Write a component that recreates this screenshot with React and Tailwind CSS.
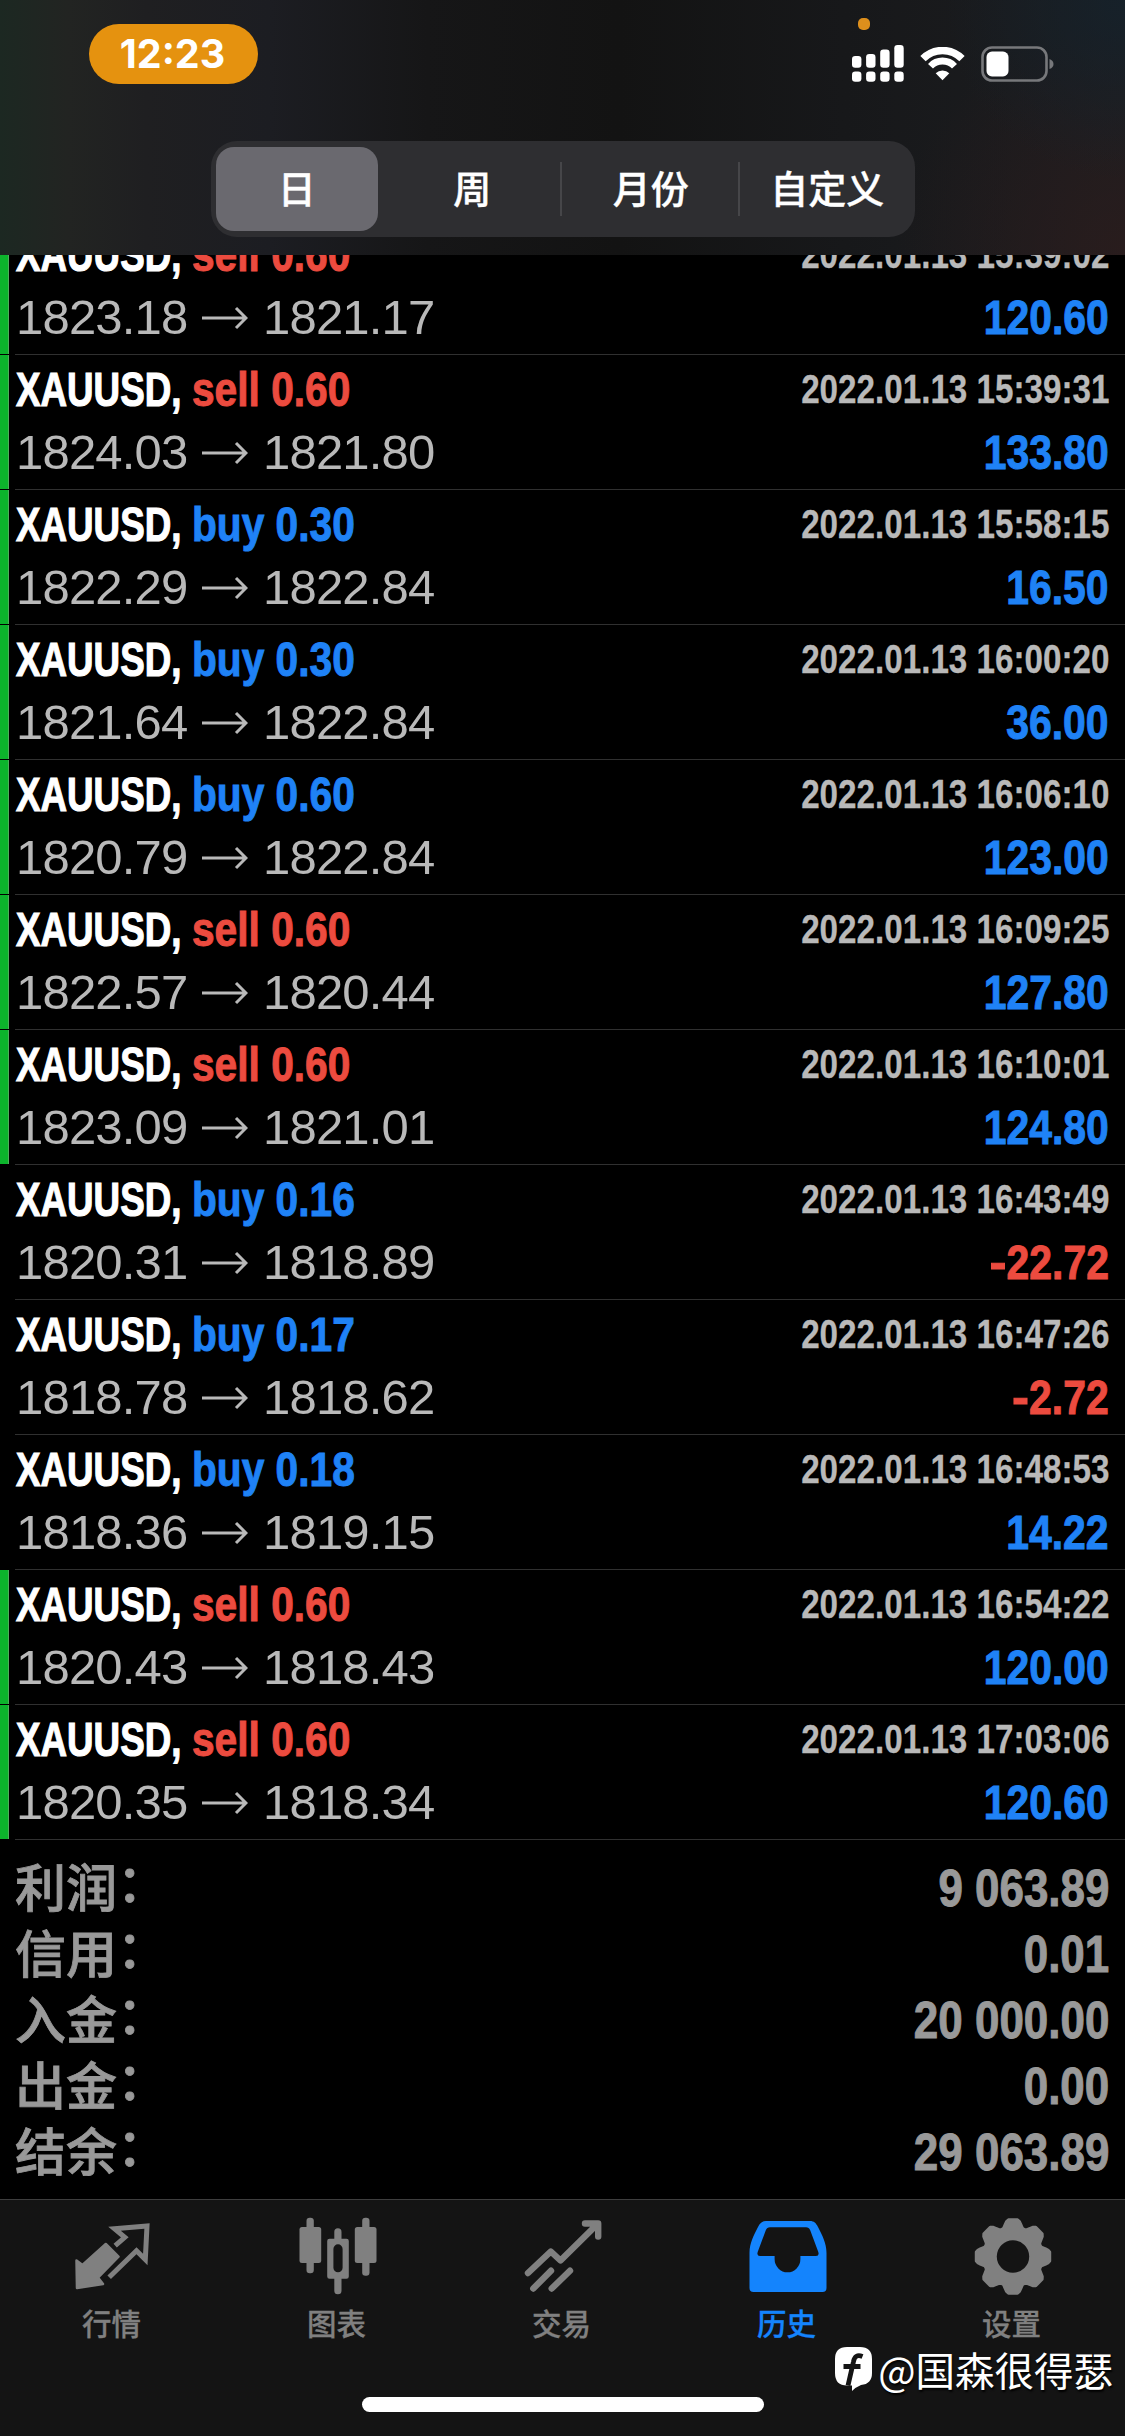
import React from "react";
import clsx from "clsx";

const deals = [
  { type: "sell", lots: "0.60", open: "1823.18", close: "1821.17", time: "2022.01.13 15:39:02", profit: "120.60", tp: true },
  { type: "sell", lots: "0.60", open: "1824.03", close: "1821.80", time: "2022.01.13 15:39:31", profit: "133.80", tp: true },
  { type: "buy", lots: "0.30", open: "1822.29", close: "1822.84", time: "2022.01.13 15:58:15", profit: "16.50", tp: true },
  { type: "buy", lots: "0.30", open: "1821.64", close: "1822.84", time: "2022.01.13 16:00:20", profit: "36.00", tp: true },
  { type: "buy", lots: "0.60", open: "1820.79", close: "1822.84", time: "2022.01.13 16:06:10", profit: "123.00", tp: true },
  { type: "sell", lots: "0.60", open: "1822.57", close: "1820.44", time: "2022.01.13 16:09:25", profit: "127.80", tp: true },
  { type: "sell", lots: "0.60", open: "1823.09", close: "1821.01", time: "2022.01.13 16:10:01", profit: "124.80", tp: true },
  { type: "buy", lots: "0.16", open: "1820.31", close: "1818.89", time: "2022.01.13 16:43:49", profit: "-22.72" },
  { type: "buy", lots: "0.17", open: "1818.78", close: "1818.62", time: "2022.01.13 16:47:26", profit: "-2.72" },
  { type: "buy", lots: "0.18", open: "1818.36", close: "1819.15", time: "2022.01.13 16:48:53", profit: "14.22" },
  { type: "sell", lots: "0.60", open: "1820.43", close: "1818.43", time: "2022.01.13 16:54:22", profit: "120.00", tp: true },
  { type: "sell", lots: "0.60", open: "1820.35", close: "1818.34", time: "2022.01.13 17:03:06", profit: "120.60", tp: true },
];

const totals = [
  ["利润", "9 063.89"],
  ["信用", "0.01"],
  ["入金", "20 000.00"],
  ["出金", "0.00"],
  ["结余", "29 063.89"],
];

function SignalIcon() {
  const tops = [11, 9, 4.5, 0];
  return (
    <svg width="52" height="37" viewBox="0 0 52 37" fill="#fff">
      {tops.map((y, i) => (
        <g key={i}>
          <rect x={i * 14.1} y={y} width="9.4" height={22.7 - y} rx="3.2" />
          <rect x={i * 14.1} y="26.5" width="9.4" height="10.2" rx="3.2" />
        </g>
      ))}
    </svg>
  );
}

function WifiIcon() {
  return (
    <svg width="45" height="34" viewBox="0 0 45 34" fill="none" stroke="#fff">
      <path d="M3 11.7A27.2 27.2 0 0 1 42 11.7" strokeWidth="7.4" />
      <path d="M10.5 19.2A16.4 16.4 0 0 1 34.5 19.2" strokeWidth="6.8" />
      <path d="M22.5 33.3L15.7 26.2A9.6 9.6 0 0 1 29.3 26.2Z" fill="#fff" stroke="none" />
    </svg>
  );
}

function BatteryIcon() {
  return (
    <svg width="73" height="36" viewBox="0 0 73 36">
      <rect x="1.5" y="1.5" width="64" height="33" rx="9.5" fill="none" stroke="#77787b" strokeWidth="2.6" />
      <rect x="5.5" y="5.6" width="22" height="24.8" rx="5.5" fill="#fff" />
      <path d="M68.5 13Q72.5 14.5 72.5 18T68.5 23Z" fill="#77787b" />
    </svg>
  );
}

function Header() {
  const tab = "flex flex-1 items-center justify-center";
  return (
    <header className="relative h-[255px] bg-[linear-gradient(90deg,#1c2822_0%,#222422_6%,#1f1f21_13%,#1c1d22_24%,#161617_38%,#131313_55%,#17181a_75%,#1c1d20_100%)]">
      {/* tint of the content showing through the translucent bar */}
      <div className="absolute inset-0 bg-[radial-gradient(circle_at_100%_0%,#15222ccc,transparent_180px),radial-gradient(circle_at_100%_100%,#2c1c1ccc,transparent_230px)]" />
      <div className="absolute top-[18px] left-[858px] size-3 rounded-[5px] bg-[#dd8f1c]" />
      <div className="relative flex h-[141px] items-start justify-between pr-[71px] pl-[89px]">
        <div className="mt-6 flex h-[60px] w-[169px] items-center justify-center rounded-[30px] bg-[#e5920f] pt-0.5 pr-0.5 font-['Inter',sans-serif] text-[39.5px] font-bold text-white">
          12:23
        </div>
        <div className="mt-[45px] flex items-center">
          <SignalIcon />
          <div className="ml-4"><WifiIcon /></div>
          <div className="ml-4"><BatteryIcon /></div>
        </div>
      </div>
      <nav className="relative mx-auto flex h-24 w-[704px] items-center rounded-[26px] bg-[#2e2e31] text-[38px] font-medium text-white [-webkit-text-stroke:0.4px]">
        <div className={tab}>
          <div className="mr-0.5 flex h-[84px] w-[162px] items-center justify-center rounded-[18px] bg-[#6a696f] pt-0.5">日</div>
        </div>
        <div className={clsx(tab, "pt-0.5")}>周</div>
        <div className="h-[54px] w-0.5 bg-[#464649]" />
        <div className={clsx(tab, "pt-0.5 pl-0.5")}>月份</div>
        <div className="h-[54px] w-0.5 bg-[#464649]" />
        <div className={clsx(tab, "pt-0.5")}>自定义</div>
      </nav>
    </header>
  );
}

function Deal({ deal }) {
  const loss = deal.profit.startsWith("-");
  return (
    <li className="flex h-[135px]">
      <div className={clsx("mr-1.5 h-[134px] w-[9px]", deal.tp && "border-r border-[#4fae5c] bg-[#0cb42c]")} />
      <div className="flex-1 border-b border-[#303030] pt-[3px] pr-4">
        <div className="flex h-[63px] pl-px text-[49px] leading-[63px] font-bold whitespace-nowrap">
          <span className="w-[176px] origin-left scale-x-[0.75] text-white [-webkit-text-stroke:1.2px]">XAUUSD,</span>
          <span
            className={clsx(
              "origin-left scale-x-[0.83] [-webkit-text-stroke:1px]",
              deal.type === "sell" ? "text-[#ec4b3f]" : "text-[#1f82f6]"
            )}
          >
            {deal.type} {deal.lots}
          </span>
          <span className="ml-auto origin-right scale-x-[0.83] text-[40px] text-[#b9b9b9] [-webkit-text-stroke:0.3px]">{deal.time}</span>
        </div>
        <div className="flex h-[63px] items-center text-[49px] leading-[63px] whitespace-nowrap text-[#b9b9b9]">
          <span className="w-[187px] pl-px tracking-[-0.8px]">{deal.open}</span>
          <svg width="46" height="24" viewBox="0 0 46 24" fill="none" stroke="currentColor" strokeWidth="3">
            <path d="M0 12H44M34 2L44 12L34 22" />
          </svg>
          <span className="ml-[15px] tracking-[-0.8px]">{deal.close}</span>
          <span
            className={clsx(
              "ml-auto origin-right scale-x-[0.835] font-bold [-webkit-text-stroke:1px]",
              loss ? "text-[#ec4b3f]" : "text-[#1f82f6]"
            )}
          >
            {loss && <span className="mr-1 inline-block origin-left scale-x-125">-</span>}
            {deal.profit.replace("-", "")}
          </span>
        </div>
      </div>
    </li>
  );
}

function Totals() {
  return (
    <div className="h-[359px] pt-[15px] pr-4 pl-[15px] text-[#999]">
      {totals.map(([label, value]) => (
        <div key={label} className="flex h-[66px] items-center justify-between leading-[66px] whitespace-nowrap">
          <span className="pt-1 text-[51px] font-medium [-webkit-text-stroke:0.8px]">
            {label}
            <span className="inline-block -translate-y-[5px]">：</span>
          </span>
          <span className="origin-right scale-x-[0.845] text-[52px] font-bold [-webkit-text-stroke:1px]">{value}</span>
        </div>
      ))}
    </div>
  );
}

function QuotesIcon() {
  return (
    <svg width="80" height="82" viewBox="0 0 80 82" fill="none" stroke="currentColor">
      <path d="M3.5 46.5L9.5 51L32.8 30L45.5 42.7L25 63.5L30 70L4 74Z" fill="currentColor" strokeWidth="2.5" strokeLinejoin="round" />
      <path d="M42.2 31.7L51.8 23.3L41.5 14.7L74 12L72.3 45.5L63.5 36.7L36.2 63.3" strokeWidth="5" />
    </svg>
  );
}

function ChartIcon() {
  return (
    <svg width="80" height="82" viewBox="0 0 80 82" fill="currentColor">
      <rect x="1.5" y="13" width="21.7" height="36" rx="2.5" />
      <rect x="8.5" y="3.7" width="7.3" height="55.6" rx="3.3" />
      <path
        d="M39.9 14.3a3.6 3.6 0 0 1 3.6 3.6V24.7H48.5a2.3 2.3 0 0 1 2.3 2.3V62.4a2.3 2.3 0 0 1-2.3 2.3H43.5V76.7a3.6 3.6 0 0 1-7.2 0V64.7H31.5a2.3 2.3 0 0 1-2.3-2.3V27a2.3 2.3 0 0 1 2.3-2.3H36.3V17.9a3.6 3.6 0 0 1 3.6-3.6ZM40 30.3a4.6 4.6 0 0 0-4.6 4.6V53.7a4.6 4.6 0 0 0 9.2 0V34.9A4.6 4.6 0 0 0 40 30.3Z"
        fillRule="evenodd"
      />
      <rect x="56.8" y="13" width="21.7" height="36" rx="2.5" />
      <rect x="64.2" y="3.7" width="7.3" height="58" rx="3.3" />
    </svg>
  );
}

function TradeIcon() {
  return (
    <svg width="80" height="82" viewBox="0 0 80 82" fill="none" stroke="currentColor" strokeWidth="6.4" strokeLinecap="round" strokeLinejoin="round">
      <path d="M5 59L27.8 37.5L37.5 46.5L74 10.5M62 9.5H75.2V22.5" />
      <path d="M10.3 74.5L28 56.7M28.7 74.5L47 56.7" />
    </svg>
  );
}

function HistoryIcon() {
  return (
    <svg width="80" height="82" viewBox="0 0 80 82" fill="currentColor">
      <path
        d="M18 7H62C66 7 68 9 70 13C74 21 78.5 29 78.5 39V74Q78.5 78 74.5 78H5.5Q1.5 78 1.5 74V39C1.5 29 6 21 10 13C12 9 14 7 18 7ZM22 13.3Q19 13.3 17.7 16.5L9.7 38Q8.5 42 12 42H26.6V45A12.9 13.3 0 0 0 52.4 45V42H68Q71.5 42 70.3 38L62.3 16.5Q61 13.3 58 13.3Z"
        fillRule="evenodd"
      />
    </svg>
  );
}

// eight teeth, one every 45 degrees
function gearPath() {
  const pts = [];
  for (let i = 0; i < 8; i++) {
    for (const [deg, r] of [[-13, 33.5], [-10.5, 35.5], [-7, 37], [7, 37], [10.5, 35.5], [13, 33.5], [18.5, 29.8], [22.5, 29.3], [26.5, 29.8]]) {
      const a = ((i * 45 + deg) * Math.PI) / 180;
      pts.push(`${(40 + r * Math.sin(a)).toFixed(2)} ${(42.5 - r * Math.cos(a)).toFixed(2)}`);
    }
  }
  return `M${pts.join("L")}Z`;
}

function SettingsIcon() {
  return (
    <svg width="80" height="82" viewBox="0 0 80 82">
      <path d={gearPath()} fill="currentColor" stroke="currentColor" strokeWidth="3" strokeLinejoin="round" />
      <circle cx="40" cy="42.5" r="16.2" fill="#141414" />
    </svg>
  );
}

const tabs = [
  { label: "行情", Icon: QuotesIcon },
  { label: "图表", Icon: ChartIcon },
  { label: "交易", Icon: TradeIcon },
  { label: "历史", Icon: HistoryIcon, active: true },
  { label: "设置", Icon: SettingsIcon },
];

function TabBar() {
  return (
    <footer className="relative h-[237px] border-t border-[#3e3e3e] bg-[#141414]">
      <div className="flex">
        {tabs.map(({ label, Icon, active }) => (
          <div key={label} className={clsx("flex flex-1 flex-col items-center pt-3.5", active ? "text-[#1484fd]" : "text-[#808080]")}>
            <Icon />
            <span className="mt-[9px] pr-0.5 text-[29.5px] leading-10 font-medium [-webkit-text-stroke:0.3px]">{label}</span>
          </div>
        ))}
      </div>
      <div className="absolute bottom-6 left-[362px] h-[15px] w-[402px] rounded-full bg-white" />
      <div className="absolute right-3 bottom-[39px] flex items-center gap-[5px] font-['Noto_Sans_CJK_SC',sans-serif] text-[39.5px] leading-[56px] text-white [text-shadow:1px_2px_2px_#000]">
        <svg width="39" height="46" viewBox="0 0 39 46">
          <path d="M13 1H26Q38 1 38 13V27Q38 38 27 39Q22 41 18 45V39.5H13Q1 39.5 1 27V13Q1 1 13 1Z" fill="#fff" />
          <path d="M28.5 10.5Q21 7.5 19.5 15.5L14 39.5M9.5 20.5H26.5" fill="none" stroke="#141414" strokeWidth="4.8" />
        </svg>
        <span>@国森很得瑟</span>
      </div>
    </footer>
  );
}

export default function App() {
  return (
    <div className="flex h-[2436px] w-[1125px] flex-col overflow-hidden bg-black font-['Liberation_Sans','Noto_Sans_CJK_SC',sans-serif]">
      <Header />
      {/* list is scrolled, so the first row slides under the header */}
      <div className="h-[1585px] overflow-hidden">
        <ul className="-mt-[35px]">
          {deals.map((deal) => (
            <Deal key={deal.time} deal={deal} />
          ))}
        </ul>
      </div>
      <Totals />
      <TabBar />
    </div>
  );
}
